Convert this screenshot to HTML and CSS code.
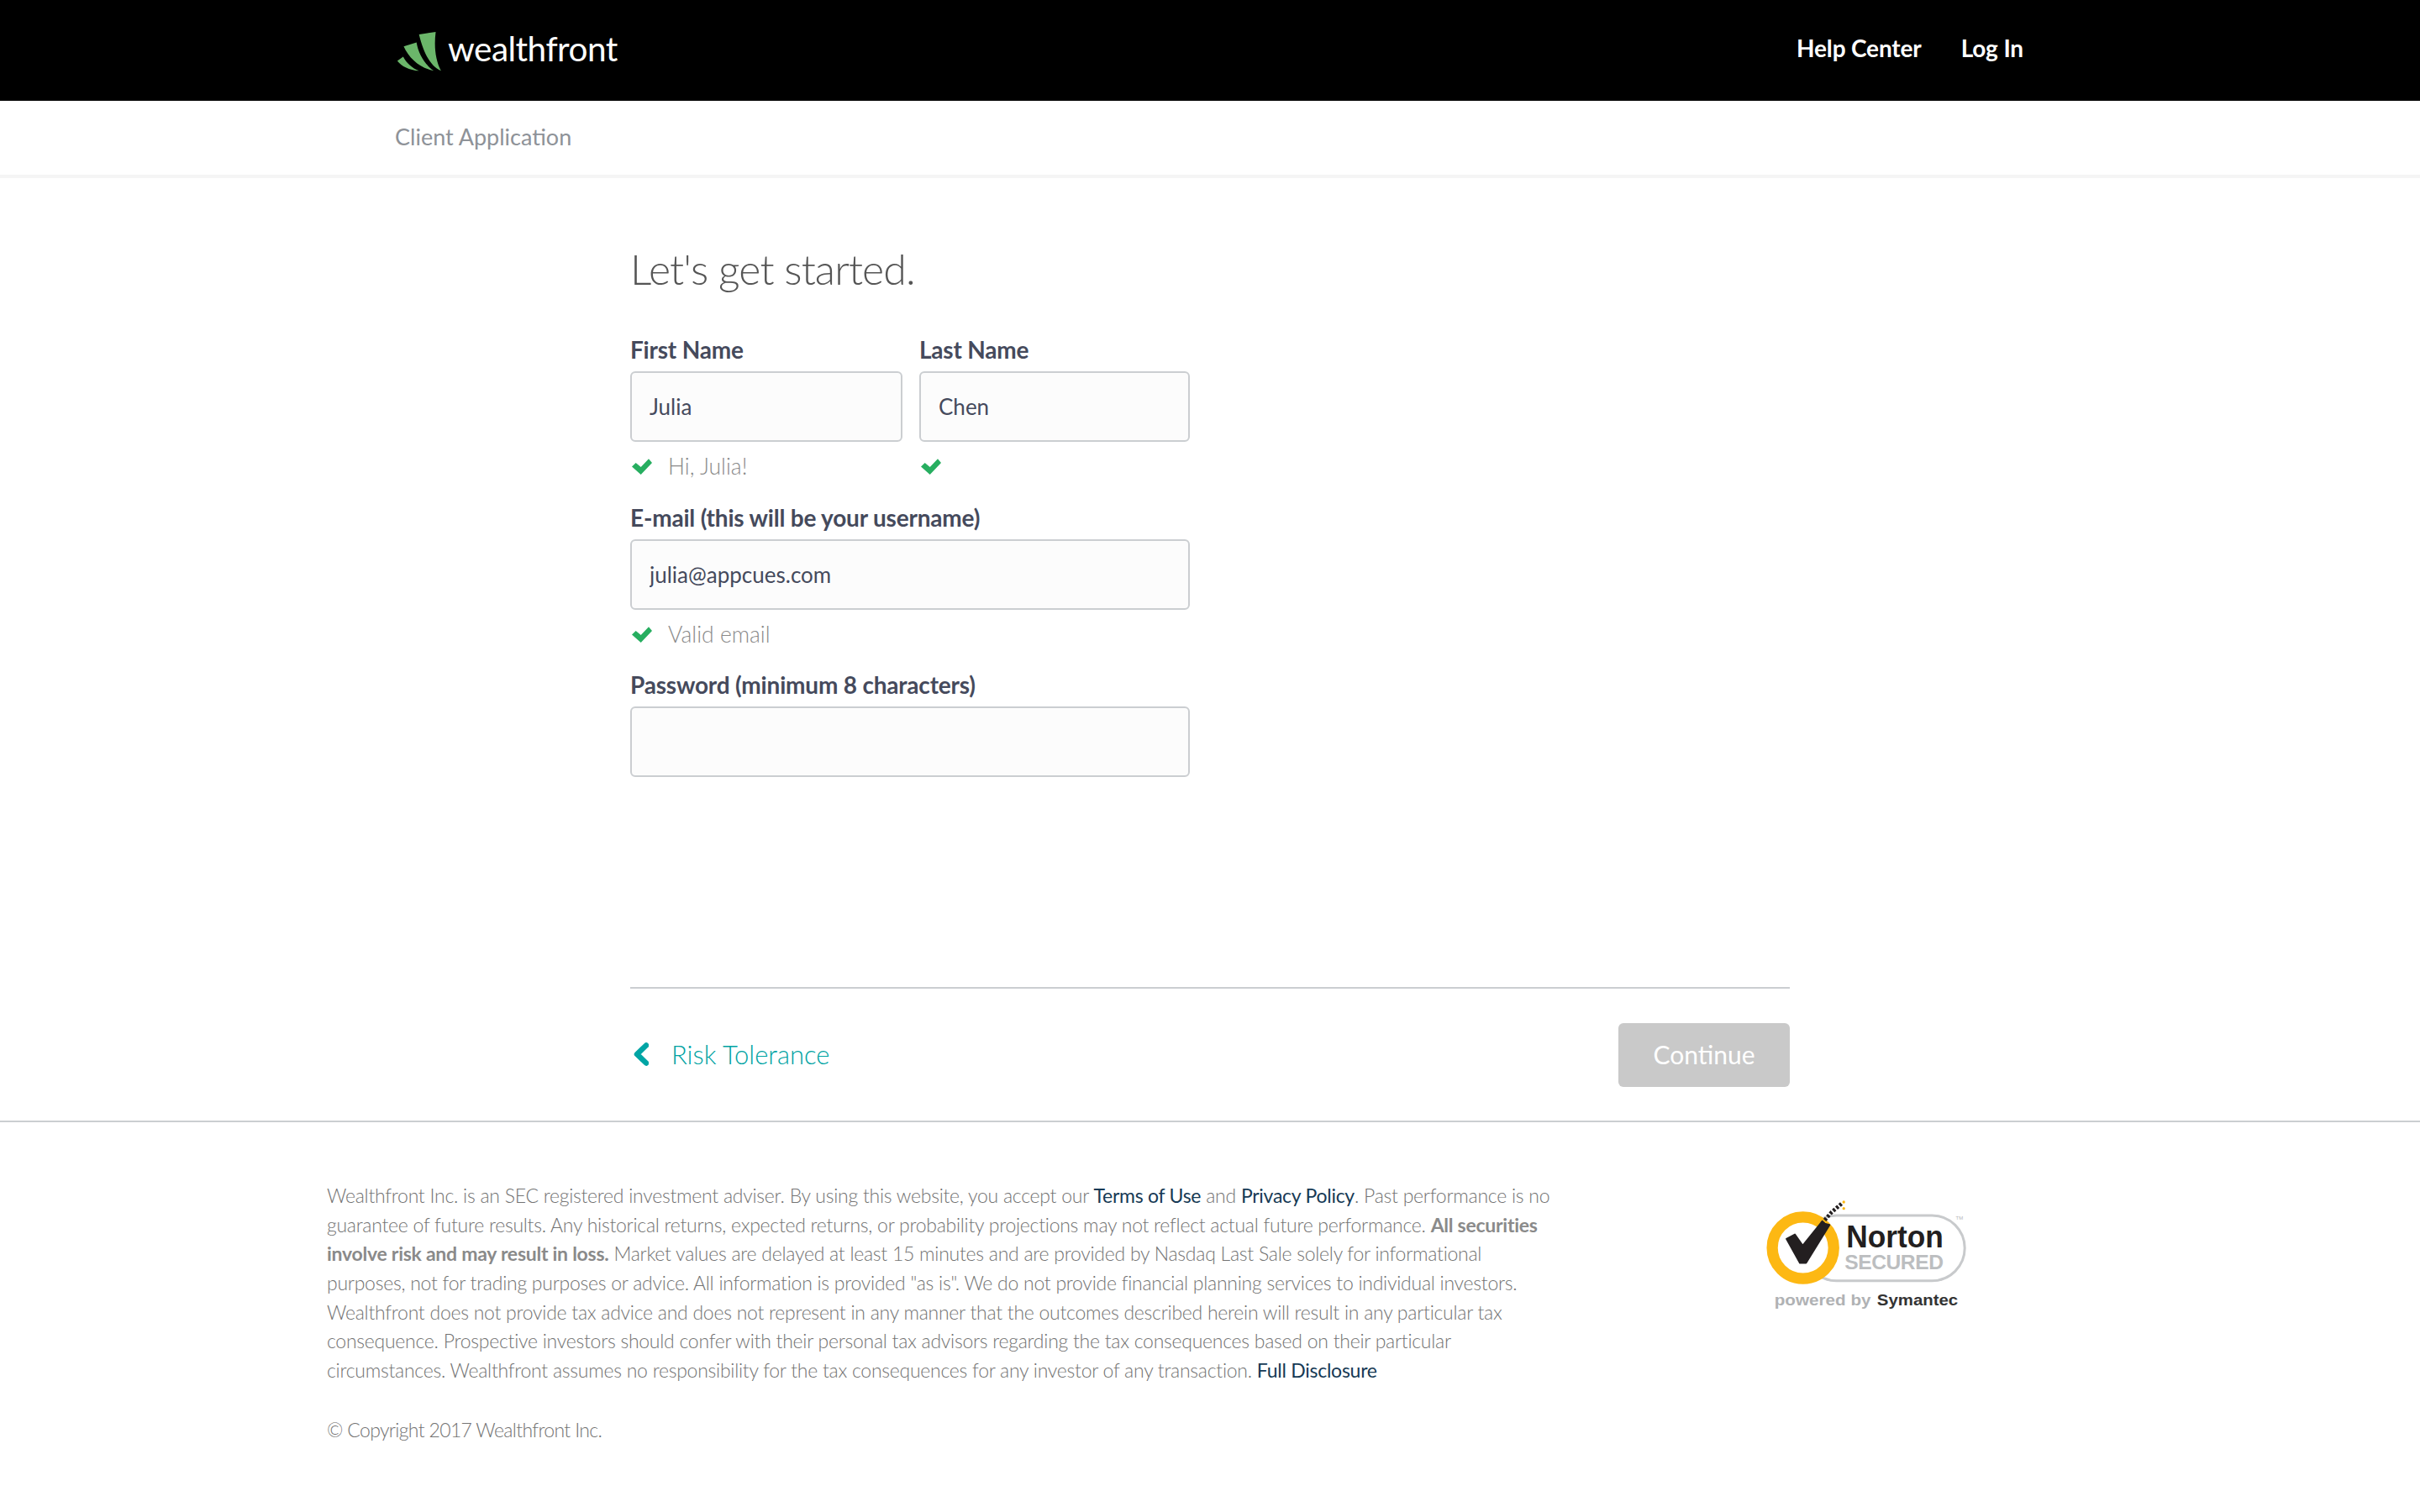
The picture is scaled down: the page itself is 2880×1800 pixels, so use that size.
FILE: index.html
```html
<!DOCTYPE html>
<html lang="en">
<head>
<meta charset="utf-8">
<title>Wealthfront - Client Application</title>
<link rel="stylesheet" href="styles.css">
</head>
<body>
<header class="topbar">
  <a class="brand" href="#">
    <svg class="brand-mark" viewBox="95 105 165 145" aria-hidden="true">
      <path d="M175 117 L235 108 C228 165 235 210 254 248 C215 232 190 180 175 117 Z"/>
      <path d="M120 160 L166 146 C172 185 195 225 228 248 C180 238 140 205 120 160 Z"/>
      <path d="M97 212 L118 197 C130 220 150 238 175 248 C140 245 112 232 97 212 Z"/>
    </svg>
    <span class="brand-name">wealthfront</span>
  </a>
  <nav class="topnav">
    <a href="#">Help Center</a>
    <a href="#">Log In</a>
  </nav>
</header>
<div class="subbar">Client Application</div>
<main class="content">
  <h1>Let's get started.</h1>
  <form class="fields">
    <div class="row">
      <div class="field">
        <label>First Name</label>
        <input type="text" value="Julia">
        <div class="hint"><svg class="check" viewBox="0 0 24 19"><path d="M0 9.5 L4.7 5 L10.7 10 L20 0.3 L24 5 L10.7 19 Z"/></svg><span>Hi, Julia!</span></div>
      </div>
      <div class="field">
        <label>Last Name</label>
        <input type="text" value="Chen">
        <div class="hint"><svg class="check" viewBox="0 0 24 19"><path d="M0 9.5 L4.7 5 L10.7 10 L20 0.3 L24 5 L10.7 19 Z"/></svg></div>
      </div>
    </div>
    <div class="field">
      <label>E-mail (this will be your username)</label>
      <input type="text" value="julia@appcues.com">
      <div class="hint"><svg class="check" viewBox="0 0 24 19"><path d="M0 9.5 L4.7 5 L10.7 10 L20 0.3 L24 5 L10.7 19 Z"/></svg><span>Valid email</span></div>
    </div>
    <div class="field">
      <label>Password (minimum 8 characters)</label>
      <input type="password">
    </div>
  </form>
  <div class="actions">
    <a class="back" href="#">
      <svg class="chevron" viewBox="0 0 18 28"><path d="M15 3.5 L4 14 L15 24.5"/></svg>
      <span>Risk Tolerance</span>
    </a>
    <button class="continue" type="button">Continue</button>
  </div>
</main>
<footer class="footer">
  <div class="legal">
    <p>Wealthfront Inc. is an SEC registered investment adviser. By using this website, you accept our <a href="#">Terms of Use</a> and <a href="#">Privacy Policy</a>. Past performance is no<br>
    guarantee of future results. Any historical returns, expected returns, or probability projections may not reflect actual future performance. <strong>All securities<br>
    involve risk and may result in loss.</strong> Market values are delayed at least 15 minutes and are provided by Nasdaq Last Sale solely for informational<br>
    purposes, not for trading purposes or advice. All information is provided "as is". We do not provide financial planning services to individual investors.<br>
    Wealthfront does not provide tax advice and does not represent in any manner that the outcomes described herein will result in any particular tax<br>
    consequence. Prospective investors should confer with their personal tax advisors regarding the tax consequences based on their particular<br>
    circumstances. Wealthfront assumes no responsibility for the tax consequences for any investor of any transaction. <a href="#">Full Disclosure</a></p>
    <p class="copyright">© Copyright 2017 Wealthfront Inc.</p>
  </div>
  <svg class="norton" viewBox="60 85 730 400" role="img" aria-label="Norton Secured, powered by Symantec">
    <rect x="200" y="142" width="576" height="234" rx="117" class="n-pill"/>
    <circle cx="197" cy="258" r="110" class="n-ring"/>
    <path d="M138 226 L168 210 L196 250 L262 168 L292 176 L208 312 L186 312 Z" class="n-tick"/>
    <path d="M265 170 L300 130 L335 100" class="n-spark"/>
    <circle cx="343" cy="94" r="5" class="n-dot"/>
    <circle cx="343" cy="117" r="5" class="n-dot"/>
    <text x="352" y="255" textLength="348" lengthAdjust="spacingAndGlyphs" class="n-norton">Norton</text>
    <text x="346" y="335" textLength="354" lengthAdjust="spacing" class="n-secured">SECURED</text>
    <text x="744" y="156" class="n-tm">TM</text>
    <text x="95" y="465" textLength="345" lengthAdjust="spacingAndGlyphs" class="n-powered">powered by</text>
    <text x="462" y="465" textLength="290" lengthAdjust="spacingAndGlyphs" class="n-symantec">Symantec</text>
  </svg>
</footer>
</body>
</html>
```
FILE: styles.css
```css
* { box-sizing: border-box; }
html, body { margin: 0; padding: 0; background: #fff; }
body { font-family: "Lato", "Open Sans", sans-serif; color: #454a5c; }
a { text-decoration: none; color: inherit; }

.topbar { height: 120px; background: #000; display: flex; align-items: center; justify-content: space-between; padding: 0 472px; }
.brand { display: flex; align-items: center; gap: 6px; color: #fff; }
.brand-mark { width: 55px; height: 48px; fill: #6bb66a; display: block; margin-top: 2px; }
.brand-name { font-size: 40.5px; font-weight: 400; letter-spacing: -0.5px; line-height: 50px; margin-bottom: 4px; }
.topnav { display: flex; gap: 47px; color: #fff; font-size: 28px; font-weight: 700; letter-spacing: -0.15px; margin-bottom: 6px; }

.subbar { height: 92px; padding: 0 0 4px 470px; border-bottom: 4px solid #f5f5f5; display: flex; align-items: center; font-size: 27px; color: #8e9298; }

.content { width: 1380px; margin: 0 auto; }
h1 { margin: 78px 0 49px; font-size: 50px; line-height: 60px; font-weight: 300; letter-spacing: -0.9px; color: #555; }

.row { display: grid; grid-template-columns: 324px 322px; column-gap: 20px; margin-bottom: 25px; }
.field { width: 666px; margin-bottom: 25px; }
.row .field { width: auto; margin-bottom: 0; }
label { display: block; height: 36px; margin-bottom: 7px; font-size: 28px; line-height: 35px; font-weight: 700; letter-spacing: -0.2px; color: #454a5c; }
input { display: block; width: 100%; height: 84px; padding: 0 21px; background: #fcfcfc; border: 2px solid #cbced1; border-radius: 6px; font: 400 26px "Lato", sans-serif; color: #454a5c; outline: 0; }
.hint { display: flex; align-items: center; height: 36px; margin-top: 11px; margin-bottom: 1px; font-size: 26.5px; font-weight: 300; color: #8a8a8a; }
.check { width: 24px; height: 19px; margin: 0 19px 0 2px; flex: none; fill: #27ae60; }

.actions { display: flex; justify-content: space-between; align-items: center; margin-top: 250px; padding: 41px 0 40px; border-top: 2px solid #cbced1; }
.back { display: flex; align-items: center; gap: 27px; font-size: 31px; line-height: 38px; font-weight: 300; color: #00a3a3; }
.back span { margin-bottom: 3px; }
.chevron { width: 18px; height: 28px; margin: 0 0 2px 4px; fill: none; stroke: #00a5a5; stroke-width: 6.5; stroke-linecap: round; stroke-linejoin: round; }
.continue { width: 204px; height: 76px; padding: 0 0 3px; border: 0; border-radius: 6px; background: #c9c9c9; color: #fff; font: 400 30px "Lato", sans-serif; }

.footer { border-top: 2px solid #cbced1; padding: 70px 0 0 389px; display: flex; }
.legal { width: 1500px; flex: none; white-space: nowrap; }
.legal p { margin: 0; font-size: 23px; line-height: 34.67px; font-weight: 300; letter-spacing: -0.26px; color: #737373; }
.legal a { color: #163a55; font-weight: 400; }
.legal strong { font-weight: 700; color: #8a8a8a; }
.legal .copyright { margin-top: 36px; letter-spacing: -0.65px; }
.norton { width: 243px; height: 133px; margin: 22px 0 0 211px; flex: none; }
.n-pill { fill: #fff; stroke: #c8cacc; stroke-width: 9; }
.n-ring { fill: #fff; stroke: #fdb813; stroke-width: 40; }
.n-tick { fill: #231f20; stroke: #231f20; stroke-width: 6; stroke-linejoin: round; }
.n-spark { fill: none; stroke: #231f20; stroke-width: 14; stroke-dasharray: 9 6; }
.n-dot { fill: #fdb813; }
.n-norton { font: 700 112px "Liberation Sans", sans-serif; fill: #231f20; }
.n-secured { font: 700 74px "Liberation Sans", sans-serif; fill: #bcbec0; }
.n-tm { font: 400 18px "Liberation Sans", sans-serif; fill: #b5b7b9; }
.n-powered { font: 700 56px "Liberation Sans", sans-serif; fill: #b0b2b4; }
.n-symantec { font: 700 56px "Liberation Sans", sans-serif; fill: #333; }
```
